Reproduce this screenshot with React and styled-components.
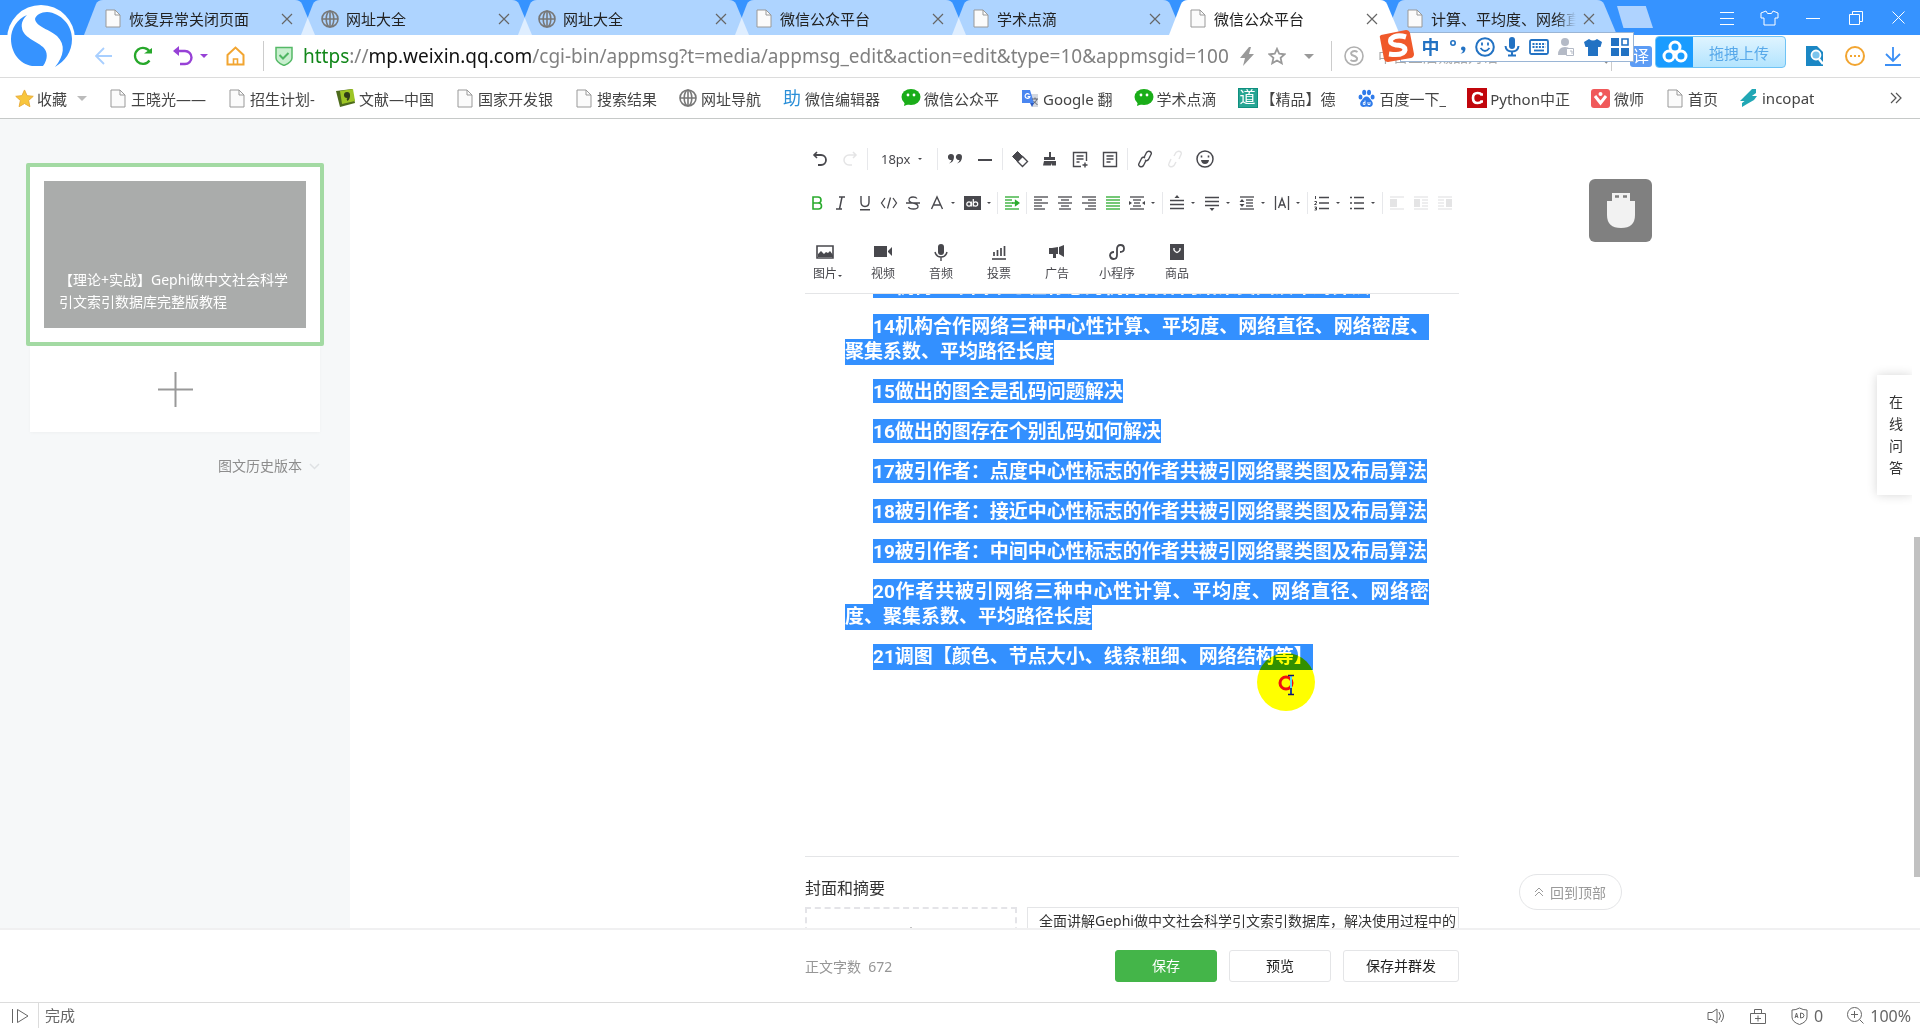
import React from 'react';
import styled, {createGlobalStyle} from 'styled-components';

const GlobalStyle = createGlobalStyle`
  * {
    box-sizing: border-box;
  }
  body {
    margin: 0;
    background: #fff;
    color: #333;
    font-family: 'Noto Sans', 'Noto Sans CJK SC', sans-serif;
    font-size: 15px;
  }
  button, input, textarea, select {
    font: inherit;
    color: inherit;
  }
  button {
    border: 0;
    padding: 0;
    background: none;
    cursor: pointer;
  }
  a {
    color: inherit;
    text-decoration: none;
  }
  svg {
    display: block;
    flex: none;
  }
`;

/* ---------- icons ---------- */

const Svg = ({w, h, box, children}) => (
  <svg
    width={w}
    height={h || w}
    viewBox={box || `0 0 ${w} ${h || w}`}
    fill="none"
    stroke="currentColor"
    aria-hidden="true"
  >
    {children}
  </svg>
);

const PageIcon = () => (
  <Svg w={16} h={19}>
    <path d="M1 1h9l5 5v12H1z" fill="#fbfbfb" stroke="#999" />
    <path d="M10 1v5h5" stroke="#999" />
  </Svg>
);

const GlobeIcon = () => (
  <Svg w={18}>
    <g stroke="#777" strokeWidth="1.6">
      <circle cx="9" cy="9" r="8" />
      <ellipse cx="9" cy="9" rx="3.8" ry="8" />
      <path d="M1 9h16M9 1v16" />
    </g>
  </Svg>
);

const CloseIcon = () => (
  <Svg w={12}>
    <path d="M1 1l10 10M11 1L1 11" stroke="#666" strokeWidth="1.2" />
  </Svg>
);

const StarIcon = () => (
  <Svg w={19} box="0 0 20 20">
    <path
      d="M10 1l2.700 6 6.500.7-4.900 4.400 1.400 6.500L10 15.300l-5.700 3.300 1.400-6.500L.8 7.700l6.500-.7z"
      fill="#f8c63c"
      stroke="#e8ab38"
    />
  </Svg>
);

const BookIcon = () => (
  <Svg w={20}>
    <path d="M0 3l16-2 3 14-15 4z" fill="#4d6b1c" stroke="none" />
    <path d="M4 3l13-2 2 12L6 16z" fill="#9dc525" stroke="none" />
    <circle cx="11" cy="7" r="3" fill="#2f3d18" stroke="none" />
    <path d="M13 7q0 4-2 5" stroke="#2f3d18" strokeWidth="2" />
  </Svg>
);

const WechatIcon = () => (
  <Svg w={20}>
    <ellipse cx="10" cy="9" rx="9.5" ry="8" fill="#1aad19" stroke="none" />
    <path d="M4 13l-1 5 5-2z" fill="#1aad19" stroke="none" />
    <circle cx="7" cy="7" r="1.4" fill="#fff" stroke="none" />
    <circle cx="13" cy="7" r="1.4" fill="#fff" stroke="none" />
  </Svg>
);

const TranslateIcon = () => (
  <Svg w={18} h={19}>
    <path d="M8 5h9v13h-6z" fill="#d4d8e0" stroke="none" />
    <path d="M1 1h8l4 13H1z" fill="#4a86f0" stroke="none" />
    <path d="M8.5 5.6a2.400 2.400 0 1 0 .3 2.100H6.600" stroke="#fff" strokeWidth="1.2" />
    <path d="M11 10h6M14 8.500V10M16 10q-1 3-4 5M12.500 12l4 4" stroke="#5f6570" />
    <path d="M9 14h4l-2 4z" fill="#2a5bc4" stroke="none" />
  </Svg>
);

const PawIcon = () => (
  <Svg w={17} h={19}>
    <g fill="#2f7bea" stroke="none">
      <ellipse cx="2.5" cy="8" rx="2" ry="2.6" />
      <ellipse cx="6.2" cy="3.5" rx="2" ry="2.8" />
      <ellipse cx="11" cy="3.5" rx="2" ry="2.8" />
      <ellipse cx="14.6" cy="8" rx="2" ry="2.6" />
      <path d="M8.500 7.500c2.500 0 3 2 4.500 3.500 3 3 2 7-1.500 7-1.500 0-2-.4-3-.4s-1.500.4-3 .4C2 18 1 14 4 11c1.500-1.500 2-3.500 4.500-3.500z" />
    </g>
    <path d="M7 11.500v4H5.300v-2H7M10 13v2.500h2V13" stroke="#fff" strokeWidth="0.9" />
  </Svg>
);

const PythonIcon = () => (
  <Svg w={20}>
    <rect width="20" height="20" fill="#c1060c" stroke="none" />
    <path d="M16 6.500h-1.800Q13.500 5 10.500 5 6 5 6 10t4.500 5q3 0 3.700-1.500H16" stroke="#fff" strokeWidth="2.6" />
  </Svg>
);

const VIcon = () => (
  <Svg w={19}>
    <rect width="19" height="19" rx="3" fill="#f0595a" stroke="none" />
    <path d="M4 7l5.500 7L15 7" stroke="#fff" strokeWidth="3" />
    <circle cx="9.5" cy="5" r="2" fill="#fff" stroke="none" />
  </Svg>
);

const IncopatIcon = () => (
  <Svg w={18} h={20}>
    <path d="M0 13L12 1h4v4L5 13zM2 19v-4l9-7h6l-3 4-7 4z" fill="#21a7b5" stroke="none" />
  </Svg>
);

const Glyph = styled.span`
  font-size: 18px;
  line-height: 20px;
  color: ${(props) => props.$color};
`;

const DaoGlyph = styled.span`
  width: 20px;
  height: 20px;
  border: 1px solid #0f8f7f;
  background: #27a593;
  color: #fff;
  font-size: 16px;
  line-height: 17px;
  text-align: center;
`;

const BrowserLogo = () => (
  <Svg w={70} h={68}>
    <circle cx="34" cy="35" r="34" fill="#fff" stroke="none" />
    <g fill="#3693ff" stroke="none">
      <path d="M20 11C10 15 4 25 4 35c0 14 9 25 21 27h11c5-7 5-14 0-19-7-6-20-10-21-19-1-5 1-9 5-13z" />
      <path d="M28 15c1-4 6-7 12-7 14 1 25 13 25 27 0 13-7 22-17 28 9-11 11-22 2-31-6-6-21-9-22-17z" />
    </g>
  </Svg>
);

/* horizontal rules of text, as [from, to] pairs, one for each line */
const Lines = ({rows, children}) => (
  <Svg w={16} h={16}>
    {rows.map(([from, to], i) => (
      <path key={i} d={`M${from} ${i * 3 + 2}H${to}`} strokeWidth="1.3" />
    ))}
    {children}
  </Svg>
);

const FULL = [1, 15];

/* ---------- browser frame ---------- */

const Page = styled.div`
  position: relative;
  display: flex;
  flex-direction: column;
  height: 100vh;
  overflow: hidden;
`;

const TabStrip = styled.header`
  display: flex;
  align-items: flex-start;
  flex: none;
  height: 35px;
  padding-left: 84px;
  background: #3693ff;
`;

const Tab = styled.div`
  display: flex;
  align-items: center;
  flex: 0 1 231px;
  min-width: 0;
  height: 35px;
  margin-right: -14px;
  padding: 2px 22px 0 20px;
  gap: 7px;
  clip-path: path('M0 35L12 4Q14 0 19 0H211Q216 0 218 4L231 35Z');
  background: ${(props) =>
    props.$active ? '#fff' : 'rgba(255, 255, 255, 0.6)'};
  color: #222;
`;

const TabIcon = styled.span`
  display: flex;
  justify-content: center;
  flex: 0 0 18px;
`;

const TabTitle = styled.span`
  flex: 1;
  overflow: hidden;
  white-space: nowrap;
  mask-image: linear-gradient(to right, #000 125px, transparent 145px);
`;

const NewTab = styled.button`
  width: 36px;
  height: 22px;
  margin: 6px 0 0 14px;
  clip-path: polygon(0 0, 80% 0, 100% 100%, 18% 100%);
  background: #afd3ff;
`;

const WindowControls = styled.div`
  display: flex;
  margin-left: auto;
`;

const WindowButton = styled.button`
  display: flex;
  align-items: center;
  justify-content: center;
  width: 43px;
  height: 35px;
  color: #fff;
`;

const LogoButton = styled.button`
  position: absolute;
  top: 4px;
  left: 7px;
`;

const NavBar = styled.nav`
  display: flex;
  align-items: center;
  flex: none;
  height: 43px;
  padding: 0 9px 0 87px;
  border-bottom: 1px solid #dcdcdc;
`;

const NavButton = styled.button`
  display: flex;
  align-items: center;
  justify-content: center;
  gap: 7px;
  width: ${(props) => props.$width || 40}px;
  height: 36px;
  color: ${(props) => props.$color || '#999'};
`;

const NavDivider = styled.span`
  width: 1px;
  height: 30px;
  background: #ccc;
`;

const Address = styled.a`
  display: flex;
  flex: 1;
  align-items: center;
  gap: 10px;
  padding-left: 11px;
  font-size: 19px;
  white-space: nowrap;
  color: #808080;
`;

const Scheme = styled.span`
  color: #12871a;
`;

const Host = styled.span`
  color: #111;
`;

const SearchBox = styled.label`
  display: flex;
  align-items: center;
  width: 279px;
  padding-left: 12px;
  gap: 14px;
`;

const SearchInput = styled.input`
  width: 200px;
  border: 0;
  padding: 0;
  outline: 0;
  background: none;
  &::placeholder {
    color: #aaa;
  }
`;

const TranslateBadge = styled.button`
  width: 22px;
  height: 21px;
  margin-left: 18px;
  border-radius: 3px;
  background: #5c9cf5;
  color: #fff;
  font-size: 16px;
  line-height: 20px;
`;

const UploadButton = styled.button`
  display: flex;
  align-items: center;
  width: 131px;
  height: 32px;
  margin: 0 9px 8px 3px;
  overflow: hidden;
  border: 1px solid #6fc3f5;
  border-radius: 4px;
  background: linear-gradient(#dff4ff, #b3e4fe);
  color: #58a9ea;
`;

const UploadLogo = styled.span`
  display: flex;
  align-items: center;
  justify-content: center;
  width: 37px;
  height: 32px;
  margin-right: 16px;
  background: #1a9cff;
  color: #fff;
`;

const Bookmarks = styled.div`
  display: flex;
  align-items: center;
  flex: none;
  height: 41px;
  padding: 0 14px;
  gap: 21px;
  border-bottom: 1px solid #c6c9c8;
  color: #444;
  white-space: nowrap;
`;

const Bookmark = styled.a`
  display: flex;
  align-items: center;
  gap: 3px;
`;

const BookmarkIcon = styled.span`
  display: flex;
  justify-content: center;
  width: 20px;
`;

const BookmarkTitle = styled.span`
  max-width: 80px;
  overflow: hidden;
`;

const Caret = styled.span`
  width: 0;
  border: ${(props) => props.$size || 5}px solid transparent;
  border-bottom: 0;
  border-top-color: ${(props) => props.$color || '#999'};
`;

const FolderCaret = styled(Caret)`
  margin: 0 0 0 7px;
`;

const MoreBookmarks = styled.button`
  margin-left: auto;
  padding-right: 4px;
`;

/* ---------- input method bar ---------- */

const ImeBar = styled.div`
  position: absolute;
  top: 32px;
  right: 286px;
  display: flex;
  align-items: center;
  height: 30px;
  padding-left: 16px;
  border: 1px solid #9ab5d5;
  background: #fff;
  color: #2272c3;
`;

const ImeLogo = styled.span`
  position: absolute;
  left: -22px;
  top: -4px;
`;

const ImeButton = styled.button`
  display: flex;
  align-items: center;
  justify-content: center;
  width: 27px;
  font-size: 18px;
  font-weight: 700;
  line-height: 26px;
`;

/* ---------- page ---------- */

const Main = styled.main`
  position: relative;
  display: flex;
  flex: 1;
  min-height: 0;
  overflow: hidden;
`;

const Sidebar = styled.aside`
  flex: 0 0 350px;
  padding: 44px 26px;
  background: #f6f8f9;
  font-size: 14px;
  line-height: 22px;
`;

const ArticleCard = styled.div`
  padding: 14px;
  border: 4px solid #a3daa3;
  border-radius: 2px;
  background: #fff;
`;

const Cover = styled.div`
  display: flex;
  align-items: flex-end;
  height: 147px;
  padding: 15px;
  background: #aaacab;
  color: #fff;
`;

const AddArticle = styled.button`
  display: flex;
  align-items: center;
  justify-content: center;
  width: 290px;
  height: 86px;
  margin: 0 4px;
  background: #fff;
  color: #999;
  box-shadow: 0 1px 3px rgba(0, 0, 0, 0.03);
`;

const History = styled.button`
  display: flex;
  align-items: center;
  gap: 7px;
  margin: 23px 4px 0 auto;
  color: #8d8d8d;
`;

const Stage = styled.div`
  display: flex;
  flex: 1;
  justify-content: center;
  padding-right: 6px;
`;

const Column = styled.section`
  width: 654px;
`;

const Toolbar = styled.div`
  padding-top: 18px;
  border-bottom: 1px solid #e4e5e7;
  color: #48484d;
`;

const ToolRow = styled.div`
  display: flex;
  align-items: center;
  height: 44px;
`;

const InsertRow = styled.div`
  display: flex;
  margin: 0 -9px;
  padding: 17px 0 9px;
`;

const Tool = styled.button`
  display: flex;
  align-items: center;
  justify-content: center;
  width: ${(props) => (props.$wide ? 30 : 24)}px;
  height: 24px;
  color: ${(props) => (props.$on ? '#2aab2d' : 'inherit')};
  opacity: ${(props) => (props.$off ? 0.14 : 1)};
`;

const DropTool = styled.button`
  display: flex;
  align-items: center;
  width: 35px;
  height: 24px;
  padding-left: 4px;
  gap: 6px;
`;

const Divider = styled.span`
  width: 1px;
  height: 22px;
  margin: 0 2px;
  background: #e7e8eb;
`;

const SizeLabel = styled.label`
  display: flex;
  align-items: center;
  width: 65px;
  padding-left: 11px;
`;

const SizeSelect = styled.select`
  width: 37px;
  border: 0;
  padding: 0;
  outline: 0;
  appearance: none;
  background: none;
  font-size: 13px;
`;

const InsertTool = styled.button`
  display: flex;
  flex-direction: column;
  align-items: center;
  gap: 2px;
  min-width: 58px;
  padding: 0 13px;
  font-size: 12px;
  line-height: 20px;
`;

const InsertIcon = styled.span`
  display: flex;
  align-items: center;
  height: 20px;
`;

const InsertLabel = styled.span`
  position: relative;
`;

const LabelCaret = styled(Caret)`
  position: absolute;
  top: 11px;
  left: 25px;
`;

const Writing = styled.div`
  height: 562px;
  overflow: hidden;
  padding: 0 30px 0 40px;
  outline: 0;
`;

const Article = styled.div`
  margin-top: -20px;
  font-size: 19px;
  font-weight: 700;
  line-height: 25px;
  color: #fff;
`;

const Paragraph = styled.p`
  margin: 0 0 15px;
  text-indent: 28px;
  text-align: justify;
`;

/* Roboto goes first so that the highlight keeps its shorter line box */
const Selected = styled.span`
  padding: ${(props) => (props.$tall ? '1px 0 2px' : '1px 0 0')};
  background: #3390ff;
  font-family: Roboto, 'Noto Sans CJK SC', sans-serif;
`;

const Summary = styled.section`
  padding-top: 19px;
  border-top: 1px solid #e4e5e7;
`;

const SummaryTitle = styled.h2`
  margin: 0 0 7px;
  font-size: 16px;
  font-weight: 400;
  line-height: 24px;
`;

const SummaryRow = styled.div`
  display: flex;
  gap: 10px;
`;

const CoverPicker = styled.button`
  display: flex;
  justify-content: center;
  width: 212px;
  height: 118px;
  padding-top: 18px;
  border: 2px dashed #e4e4e8;
  color: #888;
`;

const Digest = styled.textarea`
  flex: 1;
  height: 118px;
  padding: 1px 0 0 11px;
  border: 1px solid #e4e5e7;
  outline: 0;
  overflow: hidden;
  resize: none;
  font-size: 14px;
  line-height: 24px;
`;

const UsbButton = styled.button`
  position: absolute;
  top: 60px;
  right: 268px;
  display: flex;
  align-items: center;
  justify-content: center;
  width: 63px;
  height: 63px;
  border-radius: 6px;
  background: #808080;
`;

const HelpTab = styled.button`
  position: absolute;
  top: 256px;
  right: 8px;
  width: 35px;
  height: 120px;
  padding: 0 9px 0 12px;
  background: #fff;
  box-shadow: 0 0 10px rgba(0, 0, 0, 0.16);
  font-size: 14px;
  line-height: 22px;
  clip-path: inset(-10px 0 -10px -10px);
`;

const BackToTop = styled.button`
  position: absolute;
  right: 298px;
  bottom: 18px;
  display: flex;
  align-items: center;
  gap: 6px;
  height: 36px;
  padding: 0 15px 0 14px;
  border: 1px solid #e4e5e7;
  border-radius: 18px;
  background: #fff;
  color: #9a9a9a;
  font-size: 14px;
`;

const ScrollThumb = styled.div`
  position: absolute;
  top: 418px;
  right: 0;
  width: 6px;
  height: 340px;
  background: #c1c1c1;
`;

const Pointer = styled.div`
  position: absolute;
  top: 653px;
  left: 1257px;
  mix-blend-mode: multiply;
`;

const PointerMark = styled.div`
  position: absolute;
  top: 674px;
  left: 1278px;
`;

const ActionBar = styled.footer`
  display: flex;
  flex: none;
  justify-content: center;
  height: 74px;
  padding: 0 6px 0 350px;
  border-top: 2px solid #f0f0f1;
  background: #fff;
`;

const ActionRow = styled.div`
  display: flex;
  align-items: center;
  gap: 12px;
  width: 654px;
  font-size: 14px;
`;

const WordCount = styled.span`
  margin-right: auto;
  color: #969696;
`;

const ActionButton = styled.button`
  height: 32px;
  padding: 0 22px 2px;
  min-width: 102px;
  border: 1px solid ${(props) => (props.$primary ? '#44b549' : '#e4e5e7')};
  border-radius: 3px;
  background: ${(props) => (props.$primary ? '#44b549' : '#fff')};
  color: ${(props) => (props.$primary ? '#fff' : '#222')};
`;

const StatusBar = styled.div`
  display: flex;
  align-items: center;
  flex: none;
  height: 26px;
  padding: 0 9px 0 11px;
  border-top: 1px solid #dcdcdc;
  color: #666;
`;

const StatusText = styled.span`
  margin: 0 auto 0 9px;
  padding-left: 6px;
  border-left: 1px solid #dcdcdc;
  line-height: 25px;
`;

const StatusButton = styled.button`
  display: flex;
  align-items: center;
  gap: 6px;
  margin-left: 24px;
  font-size: 16px;
`;

/* ---------- data ---------- */

const tabs = [
  {title: '恢复异常关闭页面', icon: <PageIcon />},
  {title: '网址大全', icon: <GlobeIcon />},
  {title: '网址大全', icon: <GlobeIcon />},
  {title: '微信公众平台', icon: <PageIcon />},
  {title: '学术点滴', icon: <PageIcon />},
  {title: '微信公众平台', icon: <PageIcon />, active: true},
  {title: '计算、平均度、网络直径', icon: <PageIcon />},
];

const bookmarks = [
  {title: '王晓光——', icon: <PageIcon />},
  {title: '招生计划-', icon: <PageIcon />},
  {title: '文献—中国', icon: <BookIcon />},
  {title: '国家开发银', icon: <PageIcon />},
  {title: '搜索结果', icon: <PageIcon />},
  {title: '网址导航', icon: <GlobeIcon />},
  {title: '微信编辑器', icon: <Glyph $color="#2b8fd8">助</Glyph>},
  {title: '微信公众平', icon: <WechatIcon />},
  {title: 'Google 翻', icon: <TranslateIcon />},
  {title: '学术点滴', icon: <WechatIcon />},
  {title: '【精品】德', icon: <DaoGlyph>道</DaoGlyph>},
  {title: '百度一下_', icon: <PawIcon />},
  {title: 'Python中正', icon: <PythonIcon />},
  {title: '微师', icon: <VIcon />},
  {title: '首页', icon: <PageIcon />},
  {title: 'incopat', icon: <IncopatIcon />},
];

const paragraphs = [
  '13机构：中间中心性标志的机构合作网络聚类图及布局算法',
  '14机构合作网络三种中心性计算、平均度、网络直径、网络密度、聚集系数、平均路径长度',
  '15做出的图全是乱码问题解决',
  '16做出的图存在个别乱码如何解决',
  '17被引作者：点度中心性标志的作者共被引网络聚类图及布局算法',
  '18被引作者：接近中心性标志的作者共被引网络聚类图及布局算法',
  '19被引作者：中间中心性标志的作者共被引网络聚类图及布局算法',
  '20作者共被引网络三种中心性计算、平均度、网络直径、网络密度、聚集系数、平均路径长度',
  '21调图【颜色、节点大小、线条粗细、网络结构等】',
];

const inserts = [
  {
    label: '图片',
    menu: true,
    icon: (
      <Svg w={18} h={14}>
        <path d="M1 1h16v12H1z" strokeWidth="1.6" />
        <path d="M2 12V9l3-3 3 3 2-2 2 1 2-2 3 4v2z" fill="currentColor" stroke="none" />
      </Svg>
    ),
  },
  {
    label: '视频',
    icon: (
      <Svg w={19} h={12}>
        <path d="M0 0h13v11H0zM14 5l4-4v9l-4-4z" fill="currentColor" stroke="none" />
      </Svg>
    ),
  },
  {
    label: '音频',
    icon: (
      <Svg w={14} h={18}>
        <rect x="4" y="1" width="6" height="11" rx="3" fill="currentColor" stroke="none" />
        <path d="M1 9q1 5 6 5t6-5M7 14v4" strokeWidth="1.4" />
      </Svg>
    ),
  },
  {
    label: '投票',
    icon: (
      <Svg w={14} h={15}>
        <path d="M2 11V7M5.500 11V5M9 11V3M12.500 11V1" strokeWidth="1.7" />
        <path d="M0 14h14" strokeWidth="1.6" />
      </Svg>
    ),
  },
  {
    label: '广告',
    icon: (
      <Svg w={16} h={16}>
        <path d="M0 4h3l6-1v7H7v4H4v-4H0zM10 3l5-2v12l-5-3z" fill="currentColor" stroke="none" />
      </Svg>
    ),
  },
  {
    label: '小程序',
    icon: (
      <Svg w={16} h={16}>
        <path
          d="M5 8q-4 0-4 3.500Q1.500 15 4.500 15 8 15 8 11V5q0-4 3.500-4Q15 1 15 4.500 15 8 11 8"
          strokeWidth="1.8"
        />
      </Svg>
    ),
  },
  {
    label: '商品',
    icon: (
      <Svg w={14} h={16}>
        <path d="M0 0h14v16H0z" fill="currentColor" stroke="none" />
        <path d="M4 4v2q3 5 6 0V4" stroke="#fff" strokeWidth="1.4" />
      </Svg>
    ),
  },
];

/* ---------- components ---------- */

const Tabs = () => (
  <TabStrip>
    {tabs.map((tab, i) => (
      <Tab key={i} $active={tab.active}>
        <TabIcon>{tab.icon}</TabIcon>
        <TabTitle>{tab.title}</TabTitle>
        <button aria-label="关闭">
          <CloseIcon />
        </button>
      </Tab>
    ))}
    <NewTab aria-label="新标签" />
    <WindowControls>
      <WindowButton aria-label="菜单">
        <Svg w={14}>
          <path d="M0 1.500h14M0 7.500h14M0 13.500h14" />
        </Svg>
      </WindowButton>
      <WindowButton aria-label="皮肤">
        <Svg w={19} h={16}>
          <path d="M6 1L1 3v5h3v7h11V8h3V3l-5-2-1.500 2.500h-4z" strokeLinejoin="round" />
        </Svg>
      </WindowButton>
      <WindowButton aria-label="最小化">
        <Svg w={14}>
          <path d="M0 7.500h14" />
        </Svg>
      </WindowButton>
      <WindowButton aria-label="还原">
        <Svg w={14}>
          <path d="M.5 3.500h10v10H.5zM3.500 3V.5h10v10H11" />
        </Svg>
      </WindowButton>
      <WindowButton aria-label="关闭窗口">
        <Svg w={13}>
          <path d="M.5.5l12 12M12.500.5l-12 12" />
        </Svg>
      </WindowButton>
    </WindowControls>
  </TabStrip>
);

const Navigation = () => (
  <NavBar>
    <NavButton aria-label="后退" $width={34} $color="#a8cfff">
      <Svg w={18}>
        <path d="M17 9H1M9 1L1 9l8 8" strokeWidth="1.8" />
      </Svg>
    </NavButton>
    <NavButton aria-label="刷新" $width={44} $color="#27a82b">
      <Svg w={20}>
        <path d="M16.500 14.500A8 8 0 1 1 17 6" strokeWidth="2.3" />
        <path d="M11 7.500h8V2z" fill="currentColor" stroke="none" />
      </Svg>
    </NavButton>
    <NavButton aria-label="撤销" $width={50} $color="#9741d6">
      <Svg w={20} h={20}>
        <path d="M2 5h10a6.500 6.500 0 0 1 0 13H7" strokeWidth="2.4" />
        <path d="M6 0v10L0 5z" fill="currentColor" stroke="none" />
      </Svg>
      <Caret $size={4} $color="#9741d6" />
    </NavButton>
    <NavButton aria-label="主页" $width={41} $color="#f2a531">
      <Svg w={19} h={20}>
        <path d="M1.500 9v9.500h16V9l-8-7.500z" strokeWidth="2" />
        <path d="M7.500 18v-5h4v5" strokeWidth="1.6" />
      </Svg>
    </NavButton>
    <NavButton as="span" $width={7} />
    <NavDivider />
    <Address href="#address">
      <Svg w={18} h={20}>
        <path d="M1 1.500h16V12q0 4-8 7.500Q1 16 1 12z" fill="#c9efcf" stroke="#55b967" strokeWidth="1.5" />
        <path d="M4.500 9l3.500 3.500L13.500 7" stroke="#4fb562" strokeWidth="2" />
      </Svg>
      <span>
        <Scheme>https</Scheme>://<Host>mp.weixin.qq.com</Host>
        /cgi-bin/appmsg?t=media/appmsg_edit&amp;action=edit&amp;type=10&amp;appmsgid=100
      </span>
    </Address>
    <NavButton aria-label="极速模式" $width={28}>
      <Svg w={14} h={19}>
        <path d="M9 0L0 11h5l-2 8 11-12H9l2-7z" fill="currentColor" stroke="none" />
      </Svg>
    </NavButton>
    <NavButton aria-label="收藏此页" $width={31}>
      <Svg w={18} box="0 0 20 20">
        <path
          d="M10 2l2.500 5.500 6 .6-4.500 4 1.300 6L10 15l-5.300 3.100 1.300-6-4.500-4 6-.6z"
          strokeWidth="2"
        />
      </Svg>
    </NavButton>
    <NavButton aria-label="更多" $width={33}>
      <Caret />
    </NavButton>
    <NavButton as="span" $width={6} />
    <NavDivider />
    <SearchBox>
      <Svg w={20}>
        <circle cx="10" cy="10" r="9" stroke="#b0b0b0" strokeWidth="1.6" />
        <path
          d="M13.500 6Q11 4.500 8.500 5.500 6 7 8 9q4 1.200 5 3 .5 3-3 3-2 0-3.500-1"
          stroke="#b0b0b0"
          strokeWidth="2"
        />
      </Svg>
      <SearchInput aria-label="搜索" placeholder="中宫皇后戴品对话" />
      <Svg w={16}>
        <path d="M11 11l4 4" stroke="#888" strokeWidth="2" />
        <circle cx="7" cy="7" r="5" stroke="#888" strokeWidth="2" />
      </Svg>
    </SearchBox>
    <NavDivider />
    <TranslateBadge aria-label="翻译">译</TranslateBadge>
    <UploadButton>
      <UploadLogo>
        <Svg w={26} h={24}>
          <g strokeWidth="3">
            <circle cx="13" cy="7" r="5" />
            <circle cx="7" cy="16" r="5" />
            <circle cx="19" cy="16" r="5" />
          </g>
        </Svg>
      </UploadLogo>
      拖拽上传
    </UploadButton>
    <NavButton aria-label="查找" $width={40} $color="#1b87c4">
      <Svg w={18} h={22}>
        <path d="M0 1h11l6 6v14H0z" fill="currentColor" stroke="none" />
        <circle cx="10" cy="10" r="4.5" fill="#7cc4ec" stroke="#fff" strokeWidth="1.8" />
        <path d="M13 14l4 5" stroke="#fff" strokeWidth="2.4" />
      </Svg>
    </NavButton>
    <NavButton aria-label="扩展" $width={40} $color="#f2a531">
      <Svg w={20}>
        <circle cx="10" cy="10" r="9" strokeWidth="2" />
        <path d="M5 10h2M9 10h2M13 10h2" strokeWidth="2" />
      </Svg>
    </NavButton>
    <NavButton aria-label="下载" $width={36} $color="#3b8ff5">
      <Svg w={18} h={19}>
        <path d="M9 0v14M2 7l7 7 7-7M1 18h16" strokeWidth="1.8" />
      </Svg>
    </NavButton>
  </NavBar>
);

const BookmarkBar = () => (
  <Bookmarks>
    <Bookmark href="#favorites">
      <BookmarkIcon>
        <StarIcon />
      </BookmarkIcon>
      收藏
      <FolderCaret $color="#bbb" />
    </Bookmark>
    {bookmarks.map(({title, icon}, i) => (
      <Bookmark key={i} href="#bookmark">
        <BookmarkIcon>{icon}</BookmarkIcon>
        <BookmarkTitle>{title}</BookmarkTitle>
      </Bookmark>
    ))}
    <MoreBookmarks aria-label="更多书签">
      <Svg w={12} h={12}>
        <path d="M1 1l5 5-5 5M6 1l5 5-5 5" stroke="#555" strokeWidth="1.2" />
      </Svg>
    </MoreBookmarks>
  </Bookmarks>
);

const Ime = () => (
  <ImeBar>
    <ImeLogo>
      <Svg w={36} h={34}>
        <path d="M2 6L27 1q3 0 4 3l4 21q0 3-3 4L9 33q-3 0-4-3L1 9q-1-2 1-3z" fill="#f0592a" stroke="none" />
        <path
          d="M27 8Q17 5 12 10q-2 5 5 6 9 0 9 5-1 6-16 4"
          stroke="#fff"
          strokeWidth="5"
        />
      </Svg>
    </ImeLogo>
    <ImeButton>中</ImeButton>
    <ImeButton aria-label="标点">
      <Svg w={18}>
        <circle cx="4" cy="5" r="2.2" strokeWidth="1.6" />
        <path d="M14 8.500a2 2 0 1 0 0 4q0 2-2.500 3 4.500 0 5-4.500 0-2.500-2.500-2.500z" fill="currentColor" stroke="none" />
      </Svg>
    </ImeButton>
    <ImeButton aria-label="表情">
      <Svg w={20}>
        <circle cx="10" cy="10" r="8.8" strokeWidth="2" />
        <path d="M7 5.500v3M13 5.500v3M5.500 11q4.500 6 9 0" strokeWidth="1.8" />
      </Svg>
    </ImeButton>
    <ImeButton aria-label="语音">
      <Svg w={16} h={20}>
        <rect x="5" y="0" width="6" height="12" rx="3" fill="currentColor" stroke="none" />
        <path d="M1.500 9q.5 5.500 6.500 5.500T14.500 9M8 14v5M4 18.500h8" strokeWidth="2" />
      </Svg>
    </ImeButton>
    <ImeButton aria-label="软键盘">
      <Svg w={20} h={16}>
        <rect x="1" y="1" width="18" height="14" rx="1.5" strokeWidth="1.8" />
        <path d="M3.500 5h13M3.500 8h13" strokeWidth="1.8" strokeDasharray="2 1.2" />
        <path d="M5 11.500h10" strokeWidth="1.8" />
      </Svg>
    </ImeButton>
    <ImeButton aria-label="账号">
      <Svg w={18} h={20}>
        <g fill="#b4bac6" stroke="none">
          <circle cx="8" cy="5" r="4" />
          <path d="M1 18q0-8 7-8t6 8z" />
        </g>
        <path d="M9.500 11.500h7v7h-7zM13 14h2v3" fill="#fff" stroke="#b4bac6" />
      </Svg>
    </ImeButton>
    <ImeButton aria-label="皮肤盒子">
      <Svg w={18} h={18}>
        <path d="M5 1L0 4l1.500 5H4v9h10V9h2.500L18 4l-5-3q-4 3-8 0z" fill="currentColor" stroke="none" />
      </Svg>
    </ImeButton>
    <ImeButton aria-label="工具箱">
      <Svg w={18}>
        <path d="M0 0h8v8H0zM0 10h8v8H0zM10 10h8v8h-8z" fill="currentColor" stroke="none" />
        <path d="M11 1h6v6h-6z" strokeWidth="1.6" />
      </Svg>
    </ImeButton>
  </ImeBar>
);

const Drop = ({label, children}) => (
  <DropTool aria-label={label}>
    {children}
    <Caret $size={2} $color="#48484d" />
  </DropTool>
);

const EditorToolbar = () => (
  <Toolbar>
    <ToolRow>
      <Tool $wide aria-label="撤销">
        <Svg w={16}>
          <path d="M2 4h7a5 5 0 0 1 0 10H6" strokeWidth="1.8" />
          <path d="M5 1L2 4l3 3" strokeWidth="1.6" />
        </Svg>
      </Tool>
      <Tool $wide $off aria-label="重做">
        <Svg w={16}>
          <path d="M14 4H7a5 5 0 0 0 0 10h3M11 1l3 3-3 3" strokeWidth="1.5" />
        </Svg>
      </Tool>
      <Divider />
      <SizeLabel>
        <SizeSelect aria-label="字号" defaultValue="18px">
          <option>18px</option>
          <option>16px</option>
        </SizeSelect>
        <Caret $size={2} $color="#48484d" />
      </SizeLabel>
      <Divider />
      <Tool $wide aria-label="引用">
        <Svg w={14} h={12}>
          <path
            d="M3 1a3 3 0 1 0 .6 5.900Q3 9 1 10.500q5-1.500 5-6.500 0-3-3-3zM11 1a3 3 0 1 0 .6 5.900Q11 9 9 10.500q5-1.500 5-6.500 0-3-3-3z"
            fill="currentColor"
            stroke="none"
          />
        </Svg>
      </Tool>
      <Tool $wide aria-label="分隔线">
        <Svg w={14}>
          <path d="M0 8h14" strokeWidth="2" />
        </Svg>
      </Tool>
      <Divider />
      <Tool $wide aria-label="清除格式">
        <Svg w={18}>
          <path d="M1.500 6.500l5-5 5 5-5 5z" fill="currentColor" />
          <path d="M6.500 11.500l5-5 5 5-5 5z" strokeWidth="1.4" />
        </Svg>
      </Tool>
      <Tool $wide aria-label="格式刷">
        <Svg w={16}>
          <path d="M7 1h2v5h4v3H2V6h5zM2 10h12v4.500h-4L9 12v2.500H1z" fill="currentColor" stroke="none" />
        </Svg>
      </Tool>
      <Tool $wide aria-label="插入模板">
        <Svg w={16} h={17}>
          <path d="M9 15.500H1.500v-14h13V10M4.500 5h7M4.500 8h7M4.500 11h3M13 11.500v5M10.500 14h5" strokeWidth="1.4" />
        </Svg>
      </Tool>
      <Tool $wide aria-label="模板">
        <Svg w={16} h={17}>
          <path d="M1.500 1.500h13v14h-13zM4.500 5h7M4.500 8h7M4.500 11h4" strokeWidth="1.4" />
        </Svg>
      </Tool>
      <Divider />
      <Tool $wide aria-label="超链接">
        <Svg w={16} h={18}>
          <path
            d="M7 7.500l2.500-5q1.500-2 3.500-1t1 3l-2.500 5Q10 11.500 8 10M9 10.500l-2.500 5q-1.500 2-3.500 1t-1-3l2.500-5Q6 6.500 8 8"
            strokeWidth="1.4"
          />
        </Svg>
      </Tool>
      <Tool $wide $off aria-label="取消链接">
        <Svg w={16} h={18}>
          <path d="M7 6l2-3.500q2-2 4-1t1 3L12 9M9 12l-2 3.500q-2 2-4 1t-1-3L4 9" strokeWidth="1.4" />
        </Svg>
      </Tool>
      <Tool $wide aria-label="表情">
        <Svg w={18}>
          <circle cx="9" cy="9" r="8" strokeWidth="1.5" />
          <path d="M5 10h8q-.5 4-4 4t-4-4z" fill="currentColor" stroke="none" />
          <path d="M5.500 5.500v2M12.500 5.500v2" strokeWidth="1.6" />
        </Svg>
      </Tool>
    </ToolRow>
    <ToolRow>
      <Tool $on aria-label="加粗">
        <Svg w={16}>
          <path d="M4 2h5q3 0 3 3t-3 3H4zM4 8h5.500q3 0 3 3t-3 3H4z" strokeWidth="1.6" />
        </Svg>
      </Tool>
      <Tool aria-label="斜体">
        <Svg w={16}>
          <path d="M6 2h6M3 14h6M9 2L6.500 14" strokeWidth="1.5" />
        </Svg>
      </Tool>
      <Tool aria-label="下划线">
        <Svg w={16}>
          <path d="M4 1v6q0 4.500 4 4.500T12 7V1M3 14.700h10" strokeWidth="1.4" />
        </Svg>
      </Tool>
      <Tool aria-label="代码">
        <Svg w={18} h={14}>
          <path d="M5 2L1.500 7 5 12M13 2l3.500 5-3.500 5M10.500 1.500l-3 11" strokeWidth="1.3" />
        </Svg>
      </Tool>
      <Tool aria-label="删除线">
        <Svg w={16}>
          <path d="M12 3.500Q11 2 8 2 4 2 4 5q0 2 4 3 5 1 5 3.500Q13 14 8.500 14T3.500 12M1 8h14" strokeWidth="1.3" />
        </Svg>
      </Tool>
      <Drop label="字体颜色">
        <Svg w={16}>
          <path d="M2.500 14L8 2l5.500 12M4.500 10h7" strokeWidth="1.4" />
        </Svg>
      </Drop>
      <Drop label="背景色">
        <Svg w={17} h={14}>
          <path d="M0 0h17v14H0z" fill="currentColor" stroke="none" />
          <g stroke="#fff" strokeWidth="1.2">
            <circle cx="5" cy="8" r="2.2" />
            <circle cx="11.5" cy="8" r="2.2" />
            <path d="M7.300 5.500v5M9.300 3v7.500" />
          </g>
        </Svg>
      </Drop>
      <Divider />
      <Tool $on aria-label="首行缩进">
        <Lines rows={[FULL, [1, 8], [1, 9], [1, 8], FULL]}>
          <path d="M8 8h4M11.500 5.500L15 8l-3.500 2.500z" fill="currentColor" strokeWidth="1.3" />
        </Lines>
      </Tool>
      <Divider />
      <Tool aria-label="左对齐">
        <Lines rows={[FULL, [1, 9], FULL, [1, 9], [1, 12]]} />
      </Tool>
      <Tool aria-label="居中">
        <Lines rows={[FULL, [4, 12], FULL, [4, 12], [2, 14]]} />
      </Tool>
      <Tool aria-label="右对齐">
        <Lines rows={[FULL, [7, 15], FULL, [7, 15], [4, 15]]} />
      </Tool>
      <Tool $on aria-label="两端对齐">
        <Lines rows={[FULL, FULL, FULL, FULL, FULL]} />
      </Tool>
      <Drop label="两端缩进">
        <Lines rows={[FULL, [4, 12], [5, 11], [4, 12], FULL]}>
          <path d="M0 6l3 2-3 2zM16 6l-3 2 3 2z" fill="currentColor" stroke="none" />
        </Lines>
      </Drop>
      <Divider />
      <Drop label="段前距">
        <Svg w={16}>
          <path d="M8 0l2.500 3h-5z" fill="currentColor" stroke="none" />
          <path d="M1 5.500h14M1 9.500h14M1 13.500h14" strokeWidth="1.4" />
        </Svg>
      </Drop>
      <Drop label="段后距">
        <Svg w={16}>
          <path d="M1 2.500h14M1 6.500h14M1 10.500h14" strokeWidth="1.4" />
          <path d="M5.500 13h5L8 16z" fill="currentColor" stroke="none" />
        </Svg>
      </Drop>
      <Drop label="行间距">
        <Lines rows={[FULL, [7, 14], [7, 14], [7, 14], FULL]}>
          <path d="M3 4l2.500 3h-5zM3 12L.5 9h5z" fill="currentColor" stroke="none" />
        </Lines>
      </Drop>
      <Drop label="字间距">
        <Svg w={16}>
          <path d="M1.500 1v14M14.500 1v14M4.500 13L8 3.500l3.500 9.500M5.500 10h5" strokeWidth="1.3" />
        </Svg>
      </Drop>
      <Divider />
      <Drop label="有序列表">
        <Svg w={16}>
          <path d="M5 2.500h10M5 8h10M5 13.500h10" strokeWidth="1.4" />
          <path d="M1.500 1v3M.5 6.500h2v1.500l-2 1.500h2M.5 12h2v3h-2M1 13.500h1" />
        </Svg>
      </Drop>
      <Drop label="无序列表">
        <Svg w={16}>
          <path d="M5 2.500h10M5 8h10M5 13.500h10M1 2.500h2M1 8h2M1 13.500h2" strokeWidth="1.4" />
        </Svg>
      </Drop>
      <Divider />
      <Tool $off aria-label="左浮动">
        <Lines rows={[FULL, [1, 8], [1, 8], [1, 8], FULL]}>
          <path d="M1 4h7v8H1z" fill="currentColor" stroke="none" />
        </Lines>
      </Tool>
      <Tool $off aria-label="不浮动">
        <Lines rows={[FULL, [9, 15], [9, 15], [9, 15], FULL]}>
          <path d="M1 4h6v8H1z" fill="currentColor" stroke="none" />
        </Lines>
      </Tool>
      <Tool $off aria-label="右浮动">
        <Lines rows={[FULL, [1, 7], [1, 7], [1, 7], FULL]}>
          <path d="M9 4h6v8H9z" fill="currentColor" stroke="none" />
        </Lines>
      </Tool>
    </ToolRow>
    <InsertRow>
      {inserts.map(({label, icon, menu}) => (
        <InsertTool key={label}>
          <InsertIcon>{icon}</InsertIcon>
          <InsertLabel>
            {label}
            {menu && <LabelCaret $size={2} $color="#48484d" />}
          </InsertLabel>
        </InsertTool>
      ))}
    </InsertRow>
  </Toolbar>
);

const App = () => (
  <>
    <GlobalStyle />
    <Page>
      <Tabs />
      <Navigation />
      <BookmarkBar />
      <Main>
        <Sidebar>
          <ArticleCard>
            <Cover>【理论+实战】Gephi做中文社会科学引文索引数据库完整版教程</Cover>
          </ArticleCard>
          <AddArticle aria-label="添加图文">
            <Svg w={35}>
              <path d="M17.500 0v35M0 17.500h35" strokeWidth="2" />
            </Svg>
          </AddArticle>
          <History>
            图文历史版本
            <Svg w={11} h={7}>
              <path d="M1 1l4.500 4.500L10 1" stroke="#dfe1e4" strokeWidth="1.5" />
            </Svg>
          </History>
        </Sidebar>
        <Stage>
          <Column>
            <EditorToolbar />
            <Writing>
              <Article>
                {paragraphs.map((text, i) => (
                  <Paragraph key={i}>
                    <Selected $tall={text.length > 34 || i === paragraphs.length - 1}>
                      {text}
                    </Selected>
                  </Paragraph>
                ))}
              </Article>
            </Writing>
            <Summary>
              <SummaryTitle>封面和摘要</SummaryTitle>
              <SummaryRow>
                <CoverPicker aria-label="选择封面">
                  <Svg w={24}>
                    <path d="M12 0v24M0 12h24" />
                  </Svg>
                </CoverPicker>
                <Digest
                  aria-label="摘要"
                  defaultValue="全面讲解Gephi做中文社会科学引文索引数据库，解决使用过程中的"
                />
              </SummaryRow>
            </Summary>
          </Column>
        </Stage>
        <UsbButton aria-label="U盘">
          <Svg w={30} h={36}>
            <path d="M6 0h18v8h5v14q0 13-14 13T1 22V8h5z" fill="#f2f2f2" stroke="none" />
            <path d="M9 3.500h4M17 3.500h4" stroke="#808080" strokeWidth="2.5" />
          </Svg>
        </UsbButton>
        <HelpTab>在线问答</HelpTab>
        <BackToTop>
          <Svg w={10} h={10}>
            <path d="M1 5l4-4 4 4M1 9l4-4 4 4" />
          </Svg>
          回到顶部
        </BackToTop>
        <ScrollThumb />
      </Main>
      <ActionBar>
        <ActionRow>
          <WordCount>正文字数&nbsp; 672</WordCount>
          <ActionButton $primary>保存</ActionButton>
          <ActionButton>预览</ActionButton>
          <ActionButton>保存并群发</ActionButton>
        </ActionRow>
      </ActionBar>
      <StatusBar>
        <Svg w={18} h={16}>
          <path d="M1.500 1v14M6.500 1.500v13L17 8z" />
        </Svg>
        <StatusText>完成</StatusText>
        <StatusButton aria-label="声音">
          <Svg w={18} h={16}>
            <path d="M1 4.500h4L10 1v14l-5-3.500H1zM12 4q3 4 0 8M14 2q5 6 0 12" />
          </Svg>
        </StatusButton>
        <StatusButton aria-label="工具">
          <Svg w={18} h={16}>
            <path d="M1.500 5.500h15v10h-15zM5.500 5V1.500h7V5M9 7.500v6M6 10.500h6" />
          </Svg>
        </StatusButton>
        <StatusButton>
          <Svg w={17} h={18}>
            <path d="M8.500 1Q12 3 16 3v7q0 5-7.500 7.500Q1 15 1 10V3q4 0 7.500-2z" />
            <path d="M4 11l1.500-5L7 11M4.500 9.500h2M9.500 6v5q3.500 0 3.500-2.500T9.500 6z" />
          </Svg>
          0
        </StatusButton>
        <StatusButton>
          <Svg w={17} h={17}>
            <circle cx="7.5" cy="7.5" r="7" />
            <path d="M4 7.500h7M7.500 4v7M12.500 12.500l4 4" />
          </Svg>
          100%
        </StatusButton>
      </StatusBar>
      <LogoButton aria-label="浏览器菜单">
        <BrowserLogo />
      </LogoButton>
      <Ime />
      <Pointer>
        <Svg w={58}>
          <circle cx="29" cy="29" r="29" fill="#ff0" stroke="none" />
        </Svg>
      </Pointer>
      <PointerMark>
        <Svg w={18} h={22}>
          <circle cx="8" cy="9" r="6" stroke="#f01010" strokeWidth="3" />
          <path d="M13 2v18" stroke="#5ad8e8" strokeWidth="2" />
          <path d="M10 1.500h6M10 20.500h6M13 14v6" stroke="#12126a" strokeWidth="1.5" />
        </Svg>
      </PointerMark>
    </Page>
  </>
);

export default App;
